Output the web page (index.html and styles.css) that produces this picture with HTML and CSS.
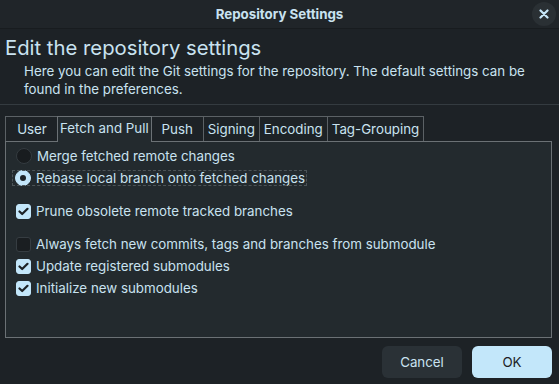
FILE: index.html
```html
<!doctype html>
<html>
<head>
    <title>Repository Settings</title>
    <link rel="stylesheet" href="styles.css">
</head>
<body>
    <div class="titlebar">
        <span></span>
        <span class="title">Repository Settings</span>
        <button class="close-button" aria-label="Close">
            <svg width="10" height="10" viewBox="0 0 10 10"><path d="M1.5 1.5 L8.5 8.5 M8.5 1.5 L1.5 8.5" stroke="#c6e6f8" stroke-width="2.2" stroke-linecap="round"/></svg>
        </button>
    </div>
    <div class="dialog">
        <div class="header">
            <h1>Edit the repository settings</h1>
            <p>Here you can edit the Git settings for the repository. The default settings can be found in the preferences.</p>
        </div>
        <div class="content">
            <div class="tabs">
                <div class="tab tab-user">User</div>
                <div class="tab selected">Fetch and Pull</div>
                <div class="tab tab-push">Push</div>
                <div class="tab">Signing</div>
                <div class="tab">Encoding</div>
                <div class="tab">Tag-Grouping</div>
            </div>
            <div class="panel">
                <div class="group">
                    <label class="option"><span class="radio"></span>Merge fetched remote changes</label>
                    <label class="option"><span class="focus"><span class="radio checked"></span>Rebase local branch onto fetched changes</span></label>
                </div>
                <div class="group">
                    <label class="option"><span class="check checked"><svg width="11" height="9" viewBox="0 0 11 9"><path d="M1.5 4.5 L4.2 7 L9.5 1.8" fill="none" stroke="#1d2226" stroke-width="2.2" stroke-linecap="round" stroke-linejoin="round"/></svg></span>Prune obsolete remote tracked branches</label>
                </div>
                <div class="group">
                    <label class="option"><span class="check"></span>Always fetch new commits, tags and branches from submodule</label>
                    <label class="option"><span class="check checked"><svg width="11" height="9" viewBox="0 0 11 9"><path d="M1.5 4.5 L4.2 7 L9.5 1.8" fill="none" stroke="#1d2226" stroke-width="2.2" stroke-linecap="round" stroke-linejoin="round"/></svg></span>Update registered submodules</label>
                    <label class="option"><span class="check checked"><svg width="11" height="9" viewBox="0 0 11 9"><path d="M1.5 4.5 L4.2 7 L9.5 1.8" fill="none" stroke="#1d2226" stroke-width="2.2" stroke-linecap="round" stroke-linejoin="round"/></svg></span>Initialize new submodules</label>
                </div>
            </div>
        </div>
        <div class="buttons">
            <button class="dialog-button">Cancel</button>
            <button class="dialog-button default">OK</button>
        </div>
    </div>
</body>
</html>
```

FILE: styles.css
```css
body {
    margin: 0;
    background-color: #1d2226;
    color: #c9e2f0;
    font-family: 'Inter', 'Noto Sans', sans-serif;
    font-size: 13.33px;
}
.titlebar {
    display: grid;
    grid-template-columns: 1fr auto 1fr;
    align-items: center;
    height: 29px;
    background-color: #202529;
    border-bottom: 1px solid #181c1f;
    box-sizing: border-box;
}
.title {
    font-weight: bold;
    color: #c9e2f0;
}
.close-button {
    justify-self: end;
    display: flex;
    align-items: center;
    justify-content: center;
    width: 24px;
    height: 24px;
    margin-right: 3px;
    padding: 0;
    border: none;
    border-radius: 50%;
    background-color: #2a3034;
}
.dialog {
    display: flex;
    flex-direction: column;
    padding: 0 7px 6px 5px;
}
.header {
    border-bottom: 1px solid #343b40;
    padding-bottom: 6px;
    margin: 0 -7px 0 -5px;
}
h1 {
    margin: 6px 0 0 5px;
    font-size: 20.3px;
    font-weight: normal;
    line-height: 25px;
}
p {
    margin: 3px 20px 0 24px;
    line-height: 17.5px;
}
.content {
    margin-top: 11px;
}
.tabs {
    display: flex;
    align-items: flex-end;
}
.tab {
    height: 24px;
    padding: 0 4px;
    line-height: 24px;
    border: 1px solid #5b6165;
    border-bottom: none;
    margin-right: -1px;
    text-align: center;
    background-color: #1d2226;
}
.tab-user {
    min-width: 42px;
    padding-left: 5px;
}
.tab-push {
    min-width: 43px;
}
.tab.selected {
    height: 25px;
    padding: 0 2px;
    line-height: 23px;
    background-color: #232a2e;
    border-color: #6b7175;
    position: relative;
    margin-bottom: -1px;
    z-index: 1;
}
.panel {
    height: 188px;
    border: 1px solid #6b7175;
    background-color: #232a2e;
    padding: 3px 10px 4px;
}
.group {
    display: flex;
    flex-direction: column;
    margin-bottom: 11px;
}
.option {
    display: flex;
    align-items: center;
    height: 22px;
    gap: 5px;
}
.focus {
    display: flex;
    align-items: center;
    gap: 5px;
    height: 14px;
    margin-left: -3px;
    padding: 0 1px 0 2px;
    outline: 1px dashed #4c5458;
}
.radio {
    width: 14px;
    height: 14px;
    border-radius: 50%;
    border: 1px solid #343b40;
    background-color: #181c1f;
    display: flex;
    align-items: center;
    justify-content: center;
}
.radio.checked {
    background-color: #c3e6fa;
    border-color: #c3e6fa;
}
.radio.checked::after {
    content: '';
    width: 6px;
    height: 6px;
    border-radius: 50%;
    background-color: #1d2226;
}
.check {
    width: 13px;
    height: 13px;
    border-radius: 3px;
    border: 1px solid #363d42;
    background-color: #1a1e21;
    display: flex;
    align-items: center;
    justify-content: center;
}
.check.checked {
    background-color: #c3e6fa;
    border-color: #c3e6fa;
}
.buttons {
    display: flex;
    justify-content: flex-end;
    gap: 10px;
    margin-top: 8px;
}
.dialog-button {
    width: 80px;
    height: 32px;
    border: none;
    border-radius: 6px;
    background-color: #2a3136;
    color: #c9e2f0;
    font-family: 'Inter', 'Noto Sans', sans-serif;
    font-size: 13.33px;
}
.dialog-button.default {
    background-color: #c3e7fa;
    color: #1d2226;
}
```
